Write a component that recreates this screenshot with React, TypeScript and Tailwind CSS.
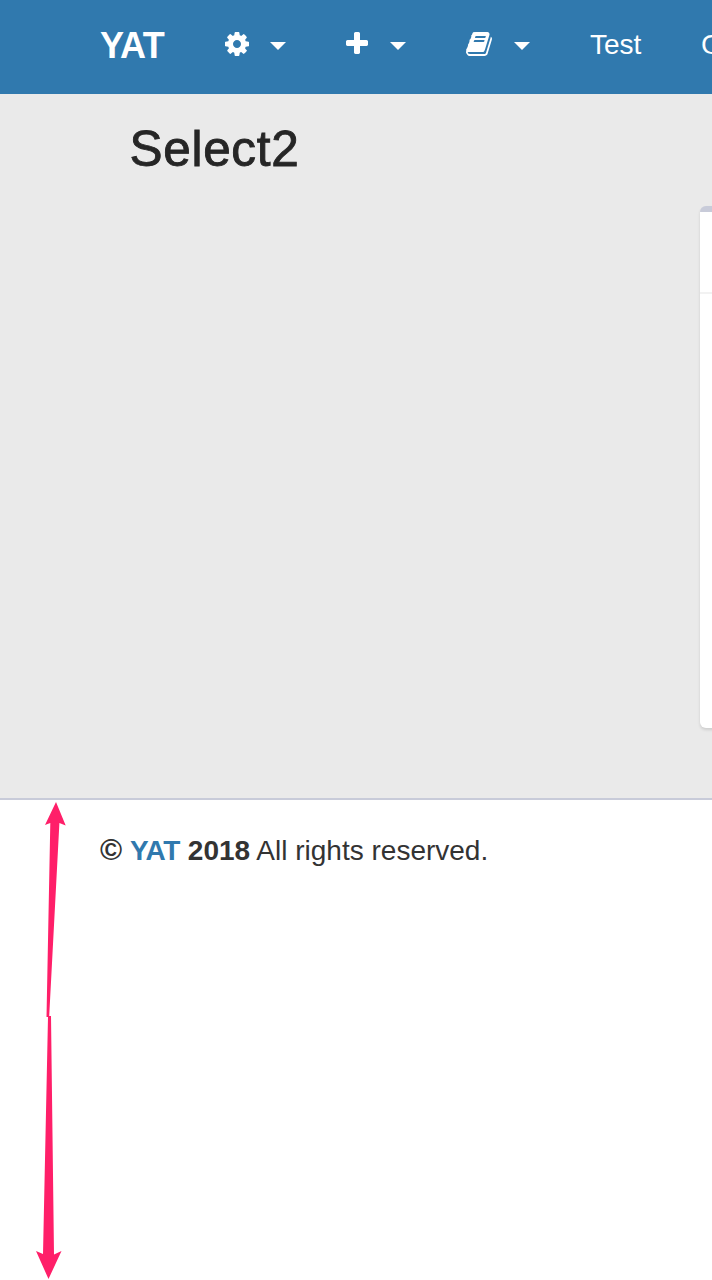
import type { ReactNode } from "react";

const cog =
  "M1152 896q0-106-75-181t-181-75-181 75-75 181 75 181 181 75 181-75 75-181zm512-109v222q0 12-8 23t-20 13l-185 28q-19 54-39 91 35 50 107 138 10 12 10 25t-9 23q-27 37-99 108t-94 71q-12 0-26-9l-138-108q-44 23-91 38-16 136-29 186-7 28-36 28h-222q-14 0-24.5-8.5t-11.5-21.5l-28-184q-49-16-90-37l-141 107q-10 9-25 9-14 0-25-11-126-114-165-168-7-10-7-23 0-12 8-23 15-21 51-66.5t54-70.5q-27-50-41-99l-183-27q-13-2-21-12.5t-8-23.5v-222q0-12 8-23t19-13l186-28q14-46 39-92-40-57-107-138-10-12-10-24 0-10 9-23 26-36 98.5-107.5t94.5-71.5q13 0 26 10l138 107q44-23 91-38 16-136 29-186 7-28 36-28h222q14 0 24.5 8.5t11.5 21.5l28 184q49 16 90 37l142-107q9-9 24-9 13 0 25 10 129 119 165 170 7 8 7 22 0 12-8 23-15 21-51 66.5t-54 70.5q26 50 41 98l183 28q13 2 21 12.5t8 23.5z";
const plus =
  "M1600 736v192q0 40-28 68t-68 28h-416v416q0 40-28 68t-68 28h-192q-40 0-68-28t-28-68v-416h-416q-40 0-68-28t-28-68v-192q0-40 28-68t68-28h416v-416q0-40 28-68t68-28h192q40 0 68 28t28 68v416h416q40 0 68 28t28 68z";
const book =
  "M1703 478q40 57 18 129l-275 906q-19 64-76.5 107.5t-122.5 43.5h-923q-77 0-148.5-53.5t-99.5-131.5q-24-67-2-127 0-4 3-27t4-37q1-8-3-21.5t-3-19.5q2-11 8-21t16.5-23.5 16.5-23.5q23-38 45-91.5t30-91.5q3-10 .5-30t-.5-28q3-11 17-28t17-23q21-36 42-92t25-90q1-9-2.5-32t.5-28q4-13 22-30.5t22-22.5q19-26 42.5-84.5t27.5-96.5q1-8-3-25.5t-2-26.5q2-8 9-18t18-23 17-21q8-12 16.5-30.5t15-35 16-36 19.5-32 26.5-23.5 36-11.5 47.5 5.5l-1 3q38-9 51-9h761q74 0 114 56t18 130l-274 906q-36 119-71.5 153.5t-128.5 34.5h-869q-27 0-38 15-11 16-1 43 24 70 144 70h923q29 0 56-15.5t35-41.5l300-987q7-22 5-57 38 15 59 43zm-1064 2q-4 13 2 22.5t20 9.5h608q13 0 25.5-9.5t16.5-22.5l21-64q4-13-2-22.5t-20-9.5h-608q-13 0-25.5 9.5t-16.5 22.5zm-83 256q-4 13 2 22.5t20 9.5h608q13 0 25.5-9.5t16.5-22.5l21-64q4-13-2-22.5t-20-9.5h-608q-13 0-25.5 9.5t-16.5 22.5z";

function MenuItem({ path, className }: { path: string; className: string }) {
  return (
    <button className={`flex h-7 shrink-0 items-start justify-between ${className}`}>
      <svg className="size-7" viewBox="0 0 1792 1792" fill="currentColor">
        <path d={path} />
      </svg>
      <svg className="mt-3 h-2 w-4" viewBox="0 0 16 8" fill="currentColor">
        <path d="M0 0h16L8 8z" />
      </svg>
    </button>
  );
}

function NavLink({ children, className }: { children: ReactNode; className: string }) {
  return <a className={`shrink-0 pt-px text-[28px] leading-7 font-normal ${className}`}>{children}</a>;
}

export default function App() {
  return (
    <div className="relative flex h-[1280px] w-full flex-col overflow-hidden bg-white font-['Liberation_Sans',Arial,sans-serif] text-[#333]">
      <header className="flex h-[94px] shrink-0 items-start overflow-hidden bg-[#3079ae] pt-[30px] pl-[100px] text-white">
        <div className="w-[123px] shrink-0 text-[36px] leading-[31px] font-bold tracking-[-0.7px]">YAT</div>
        <MenuItem path={cog} className="w-[63px]" />
        <MenuItem path={plus} className="ml-[57px] w-[63px]" />
        <MenuItem path={book} className="ml-[59px] w-[65px]" />
        <NavLink className="ml-[60px] w-[111px]">Test</NavLink>
        <NavLink className="">G</NavLink>
      </header>
      <main className="flex h-[706px] shrink-0 flex-col overflow-hidden border-b-2 border-[#c8cbd9] bg-[#eaeaea]">
        <h1 className="h-28 pt-7 pl-[129.5px] text-[49.5px] leading-[54px] font-normal tracking-[0.7px] text-[#262626] [-webkit-text-stroke:0.9px_#262626]">
          Select2
        </h1>
        <section className="ml-[700px] h-[522px] w-[400px] shrink-0 overflow-hidden rounded-md border-t-[6px] border-[#c8cbd9] bg-white shadow-[0_2px_3px_rgba(0,0,0,0.12)]">
          <div className="h-[82px] border-b-2 border-[#f2f2f2]" />
        </section>
      </main>
      <footer className="flex pt-[35px] pl-[100px] text-[28px] leading-8 whitespace-pre">
        <strong>
          <span className="text-[30px] leading-none">©</span> <a className="text-[#3079ae] tracking-[-0.4px]">YAT</a> 2018
        </strong>
        <span> All rights reserved.</span>
      </footer>
      <svg className="absolute top-[800px] left-[30px] h-[480px] w-10" viewBox="30 800 40 480" fill="#ff1f69">
        <path d="M56 802L65.7 825.5L59.4 823L49.2 1016H51L54 1254.5L61.5 1251L48.5 1279L36 1251L43 1254L48 1017H46.5L50.3 823L45 825Z" />
      </svg>
    </div>
  );
}
